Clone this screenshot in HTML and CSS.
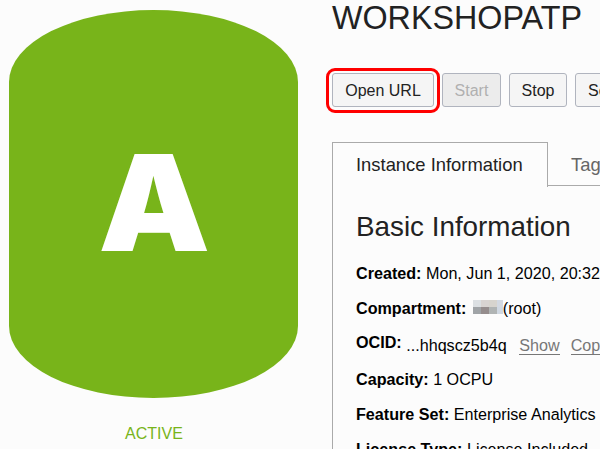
FILE: index.html
```
<!DOCTYPE html>
<html lang="en">
<head>
<meta charset="utf-8">
<title>WORKSHOPATP</title>
<link rel="stylesheet" href="styles.css">
</head>
<body>
<div class="page">
  <aside class="status">
    <div class="status-shape"><span class="status-letter">A</span></div>
    <div class="status-label">ACTIVE</div>
  </aside>
  <main class="details">
    <h1>WORKSHOPATP</h1>
    <div class="actions">
      <button class="btn highlighted">Open URL</button>
      <button class="btn start" disabled>Start</button>
      <button class="btn stop">Stop</button>
      <button class="btn service">Service Console</button>
    </div>
    <div class="tabs">
      <div class="tab active">Instance Information</div>
      <div class="tab">Tags</div>
    </div>
    <section class="panel">
      <h2>Basic Information</h2>
      <p><b>Created:</b> Mon, Jun 1, 2020, 20:32</p>
      <p><b>Compartment:</b> <span class="redacted"><i></i><i></i><i></i><i></i><i></i><i></i><i></i><i></i></span>(root)</p>
      <p><b class="ocid-label">OCID:</b> <span class="ocid">...hhqscz5b4q <a>Show</a><a>Copy</a></span></p>
      <p><b>Capacity:</b> 1 OCPU</p>
      <p><b>Feature Set:</b> Enterprise Analytics</p>
      <p><b>License Type:</b> License Included</p>
    </section>
  </main>
</div>
</body>
</html>
```
FILE: styles.css
```
* { box-sizing: border-box; }
body {
  margin: 0;
  background: #fcfcfc;
  color: #000;
  font: 16px/20px "Liberation Sans", Arial, sans-serif;
  overflow: hidden;
}
.page {
  display: flex;
  width: 600px;
  height: 449px;
  overflow: hidden;
}
.status {
  flex: 0 0 332px;
  padding: 9.5px 0 0 9px;
}
.status-shape {
  width: 288.6px;
  height: 388px;
  border-radius: 50% / 72px;
  background: #78b41a;
  display: flex;
  align-items: center;
  justify-content: center;
}
.status-letter {
  color: #fff;
  font: 900 133px/133px Inter, sans-serif;
  transform: translate(1.5px, -1px) scaleX(1.06);
}
.status-label {
  width: 290px;
  margin-top: 26px;
  text-align: center;
  color: #78b41a;
}
.details { flex: 0 0 420px; }
h1 {
  margin: 0;
  height: 73px;
  font-size: 32.3px;
  line-height: 37px;
  font-weight: 400;
  color: #222;
}
.actions { display: flex; height: 69px; }
.btn {
  flex: none;
  height: 34px;
  padding: 2px 0 0;
  border: 1px solid #b0b4be;
  border-radius: 3px;
  background: #f5f5f5;
  color: #222;
  font: inherit;
}
.highlighted {
  position: relative;
  width: 102px;
  margin-right: 8px;
}
.highlighted::after {
  content: "";
  position: absolute;
  inset: -6px -7px -7px -7px;
  border: 3px solid #f00;
  border-radius: 9px;
}
.start { width: 59px; margin-right: 8px; background: #ececec; color: #b0b0b0; }
.stop { width: 58px; margin-right: 8px; }
.service { padding: 2px 12px 0; }
.tabs { display: flex; height: 45px; }
.tab {
  height: 44px;
  padding: 13px 23px 0;
  border-bottom: 1px solid #aaa;
  flex: 1;
  color: #666;
  font-size: 18.4px;
}
.tab.active {
  flex: 0 0 216px;
  height: 45px;
  padding-top: 12px;
  border: 1px solid #aaa;
  border-bottom: 0;
  color: #222;
}
.panel {
  padding: 22px 0 0 23px;
  border-left: 1px solid #aaa;
  white-space: nowrap;
  font-size: 16.15px;
}
h2 {
  margin: 0 0 18px;
  font-size: 27.8px;
  line-height: 36px;
  font-weight: 400;
  color: #222;
}
p { margin: 0; height: 35.2px; }
.ocid-label { position: relative; top: -1px; }
.ocid { position: relative; top: 2px; }
.ocid a { color: #777; margin-left: 8px; border-bottom: 1px solid #777; }
.ocid a + a { margin-left: 11px; }
.redacted {
  display: inline-grid;
  grid-template-columns: 8px 8px 8px 6px;
  grid-template-rows: 7px 7px;
  margin-left: 2px;
  vertical-align: bottom;
  position: relative;
  top: -4px;
}
.redacted i:nth-child(1) { background: #dce0e3; }
.redacted i:nth-child(2) { background: #d8d4d2; }
.redacted i:nth-child(3) { background: #d7d4ce; }
.redacted i:nth-child(4) { background: #d3d9e2; }
.redacted i:nth-child(5) { background: #a0a4a7; }
.redacted i:nth-child(6) { background: #958d8d; }
.redacted i:nth-child(7) { background: #b0b4b4; }
.redacted i:nth-child(8) { background: #d0d8e2; }
```
